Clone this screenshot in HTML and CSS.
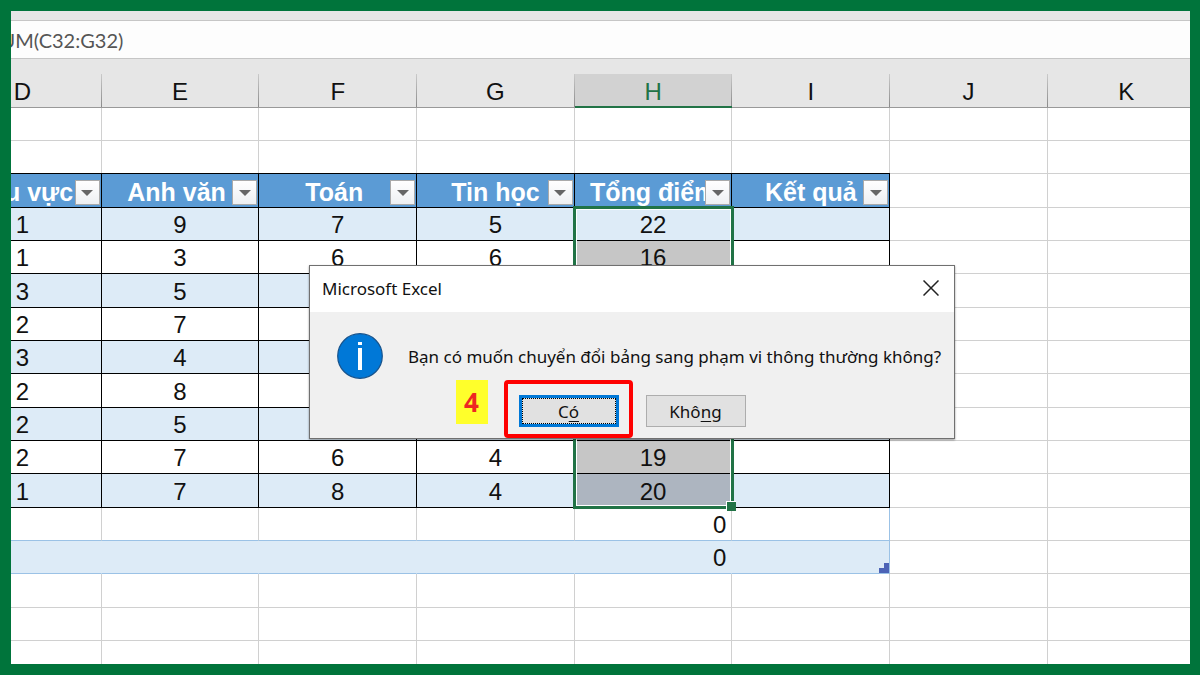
FILE: index.html
```html
<!DOCTYPE html>
<html lang="vi">
<head>
  <meta charset="UTF-8">
  <title>Microsoft Excel</title>
  <link rel="stylesheet" href="styles.css">
</head>
<body>
  <div class="frame">
    <div class="formula-bar">
      <input type="text" class="formula" aria-label="Formula" value="=SUM(C32:G32)">
    </div>

    <div class="sheet">
      <table>
        <thead>
          <tr>
            <th><span>D</span></th>
            <th><span>E</span></th>
            <th><span>F</span></th>
            <th><span>G</span></th>
            <th class="active"><span>H</span></th>
            <th><span>I</span></th>
            <th><span>J</span></th>
            <th><span>K</span></th>
          </tr>
        </thead>
        <tbody>
          <tr><td></td><td></td><td></td><td></td><td></td><td></td><td></td><td></td></tr>
          <tr><td></td><td></td><td></td><td></td><td></td><td></td><td></td><td></td></tr>
          <tr class="head">
            <td>Khu vực<button class="filter" aria-label="Lọc Khu vực"></button></td>
            <td>Anh văn&nbsp;<button class="filter" aria-label="Lọc Anh văn"></button></td>
            <td>Toán&nbsp;<button class="filter" aria-label="Lọc Toán"></button></td>
            <td>Tin học<button class="filter" aria-label="Lọc Tin học"></button></td>
            <td>Tổng điểm<button class="filter" aria-label="Lọc Tổng điểm"></button></td>
            <td>Kết quả<button class="filter" aria-label="Lọc Kết quả"></button></td>
            <td></td><td></td>
          </tr>
          <tr class="data odd">
            <td>1</td><td>9</td><td>7</td><td>5</td>
            <td class="first">22<div class="selection"></div></td>
            <td></td><td></td><td></td>
          </tr>
          <tr class="data"><td>1</td><td>3</td><td>6</td><td>6</td><td class="sel">16</td><td></td><td></td><td></td></tr>
          <tr class="data odd"><td>3</td><td>5</td><td></td><td></td><td class="sel"></td><td></td><td></td><td></td></tr>
          <tr class="data"><td>2</td><td>7</td><td></td><td></td><td class="sel"></td><td></td><td></td><td></td></tr>
          <tr class="data odd"><td>3</td><td>4</td><td></td><td></td><td class="sel"></td><td></td><td></td><td></td></tr>
          <tr class="data"><td>2</td><td>8</td><td></td><td></td><td class="sel"></td><td></td><td></td><td></td></tr>
          <tr class="data odd"><td>2</td><td>5</td><td></td><td></td><td class="sel"></td><td></td><td></td><td></td></tr>
          <tr class="data"><td>2</td><td>7</td><td>6</td><td>4</td><td class="sel">19</td><td></td><td></td><td></td></tr>
          <tr class="data odd"><td>1</td><td>7</td><td>8</td><td>4</td><td class="sel">20</td><td></td><td></td><td></td></tr>
          <tr class="extra"><td></td><td></td><td></td><td></td><td class="num">0</td><td></td><td></td><td></td></tr>
          <tr class="extra shaded">
            <td></td><td></td><td></td><td></td><td class="num">0</td>
            <td>
              <svg class="corner" width="10" height="10" viewBox="0 0 10 10"><path d="M5 0h5v10H0V5h5z" fill="#4c63b6"/></svg>
            </td>
            <td></td><td></td>
          </tr>
          <tr><td></td><td></td><td></td><td></td><td></td><td></td><td></td><td></td></tr>
          <tr><td></td><td></td><td></td><td></td><td></td><td></td><td></td><td></td></tr>
          <tr><td></td><td></td><td></td><td></td><td></td><td></td><td></td><td></td></tr>
        </tbody>
      </table>
    </div>

    <div class="dialog" role="dialog" aria-labelledby="dialog-title">
      <div class="titlebar">
        <span id="dialog-title">Microsoft Excel</span>
        <button class="close" aria-label="Đóng">
          <svg width="16" height="16" viewBox="0 0 16 16"><path d="M0.5 0.5l15 15M15.5 0.5l-15 15" stroke="#222" stroke-width="1.5"/></svg>
        </button>
      </div>
      <div class="message">
        <svg width="46" height="46" viewBox="0 0 46 46">
          <circle cx="23" cy="23" r="22.3" fill="#0078d7" stroke="#17538c" stroke-width="1.2"/>
          <path d="M21 9h4v3h-4zM21 15h4v22h-4z" fill="#fff"/>
        </svg>
        <p>Bạn có muốn chuyển đổi bảng sang phạm vi thông thường không?</p>
      </div>
      <div class="buttons">
        <div class="step">
          <button class="btn default">C<u>ó</u></button>
          <div class="highlight"></div>
          <span class="badge">4</span>
        </div>
        <button class="btn">Khô<u>n</u>g</button>
      </div>
    </div>
  </div>
</body>
</html>
```
FILE: styles.css
```css
* { box-sizing: border-box; }
body { margin: 0; font-family: "Liberation Sans", Arial, sans-serif; }
button { font: inherit; padding: 0; cursor: pointer; }

.frame {
  position: relative;
  display: flex;
  flex-direction: column;
  height: 100vh;
  border: 11px solid #00743b;
  border-right-width: 10px;
  background: #fff;
  overflow: hidden;
}

/* formula bar */
.formula-bar {
  border-top: 9px solid #e6e6e6;
  border-bottom: 1px solid #c6c6c6;
  overflow: hidden;
}
.formula {
  display: block;
  width: 110%;
  height: 38px;
  margin-left: -33px;
  padding: 0;
  border: none;
  border-top: 1px solid #c6c6c6;
  background: #fdfdfd;
  color: #555;
  font: 20px Lato, sans-serif;
}

/* grid */
.sheet { flex: 1; overflow: hidden; background: #fff; }
table {
  width: 107%;
  margin-left: -67px;
  border-collapse: separate;
  border-spacing: 0;
  table-layout: fixed;
  font-size: 24px;
  line-height: 32px;
  color: #111;
}
th {
  padding: 15px 0 0;
  background: #e6e6e6;
  border-bottom: 1px solid #999;
  font-weight: normal;
}
th span {
  display: block;
  height: 33px;
  line-height: 35px;
  border-right: 1px solid;
  border-image: linear-gradient(#ccc, #888) 1;
}
th.active { border-bottom: 2px solid #217346; color: #217346; }
th.active span { height: 32px; background: #d2d2d2; }
td {
  position: relative;
  height: 33px;
  padding: 2px 0 0;
  border-right: 1px solid #d0d0d0;
  border-bottom: 1px solid #d0d0d0;
  line-height: 30px;
  text-align: center;
  white-space: nowrap;
}
tbody tr:nth-child(3n) td { height: 34px; }

.head td:nth-child(-n+6) {
  background: #5b9bd5;
  border-color: #000;
  box-shadow: 0 -1px #000;
  color: #fff;
  font-size: 25px;
  font-weight: bold;
}
.data td:nth-child(-n+6) { border-color: #000; }
.odd td:nth-child(-n+6), .shaded td:nth-child(-n+6) { background: #ddebf7; }
.data .sel { background: #c6c6c6; }
.odd td.sel:nth-child(-n+6) { background: #adb5c0; }

.extra td:nth-child(-n+6) { border-bottom-color: #9bc2e6; }
.extra td:nth-child(6) { border-right-color: #9bc2e6; }
.shaded td:nth-child(-n+5) { border-right-color: #ddebf7; }
.extra .num { text-align: right; padding-right: 5px; }
.corner { position: absolute; right: 0; bottom: 0; }

.filter {
  position: absolute;
  right: 1px;
  bottom: 2px;
  width: 25px;
  height: 25px;
  border: 1px solid #aaa;
  background: linear-gradient(#fff, #eef0f3);
}
.filter::after {
  content: "";
  display: block;
  width: 0;
  margin: 0 auto;
  border: 6px solid transparent;
  border-top-color: #666;
  border-bottom: none;
}

.selection {
  position: absolute;
  z-index: 1;
  top: -2px;
  left: -2px;
  right: -3px;
  height: 303px;
  border: 3px solid #217346;
  box-shadow: inset 0 0 0 1px #fff;
}
.selection::after {
  content: "";
  position: absolute;
  right: -5px;
  bottom: -5px;
  width: 9px;
  height: 9px;
  border: 1px solid #fff;
  border-width: 1px 0 0 1px;
  background: #217346;
}

/* dialog */
.dialog {
  position: absolute;
  z-index: 2;
  top: 254px;
  left: 298px;
  width: 646px;
  border: 1px solid #707070;
  background: #f0f0f0;
  box-shadow: 0 1px 2px rgba(0, 0, 0, 0.4);
  font: 17px "Noto Sans", sans-serif;
  color: #111;
}
.titlebar {
  display: flex;
  align-items: center;
  justify-content: space-between;
  height: 46px;
  padding: 0 15px 2px 12px;
  background: #fff;
}
.close { display: flex; border: none; background: none; }
.message {
  display: flex;
  align-items: center;
  gap: 25px;
  padding: 21px 0 16px 27px;
}
.message p { margin: 0; white-space: nowrap; }
.buttons {
  display: flex;
  justify-content: center;
  gap: 27px;
  padding-bottom: 11px;
}
.step { position: relative; }
.btn {
  display: block;
  width: 100px;
  height: 32px;
  border: 1px solid #adadad;
  background: #e1e1e1;
  color: #111;
}
.btn u { text-underline-offset: 3px; }
.default {
  border: 3px solid #0078d7;
  outline: 1px dotted #000;
  outline-offset: -4px;
}
.highlight {
  position: absolute;
  inset: -15px -14px -11px -15px;
  border: 4px solid #fe0000;
  border-radius: 4px;
  pointer-events: none;
}
.badge {
  position: absolute;
  top: -15px;
  right: 131px;
  width: 32px;
  background: #ffff2b;
  color: #ee2722;
  font-size: 26px;
  font-weight: bold;
  line-height: 44px;
  text-align: center;
}
```
